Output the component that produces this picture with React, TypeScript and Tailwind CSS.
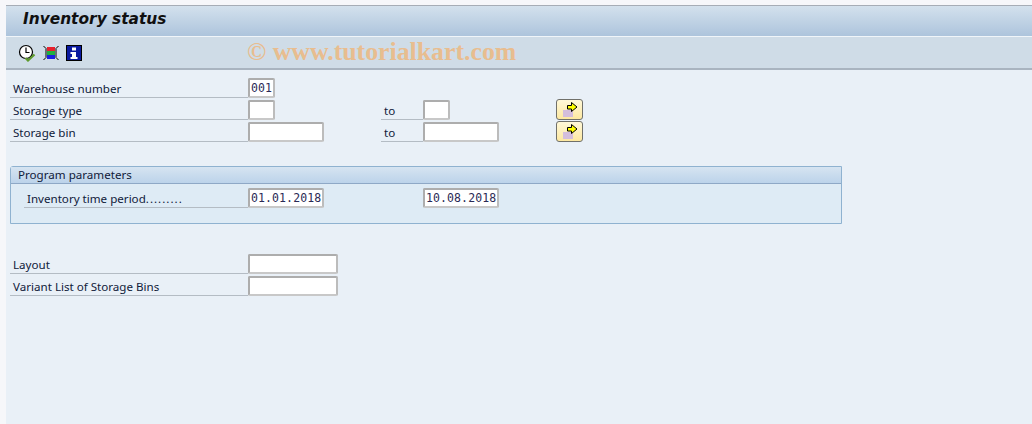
const sans = "font-['Noto_Sans','Open_Sans',sans-serif]";

function Field({ w, value, className = "" }: { w: string; value?: string; className?: string }) {
  return (
    <div
      className={`${w} h-[20px] shrink-0 bg-white border-2 border-t-[#adadad] border-l-[#adadad] border-r-[#bcbcbc] border-b-[#c8c8c8] rounded-[2px] pl-[1px] font-['DejaVu_Sans_Mono',monospace] text-[11.5px] leading-[16px] tracking-[0.1px] text-[#2a2a55] overflow-hidden ${className}`}
    >
      {value}
    </div>
  );
}

function Label({ text, dots, w, pad = "pl-[3px]" }: { text: string; dots?: string; w: string; pad?: string }) {
  return (
    <div className={`${w} ${pad} h-[20px] shrink-0 border-b border-[#b4bcc4] text-[11.6px] leading-[21px] text-[#10203a] whitespace-nowrap`}>
      {text}
      {dots && <span className="tracking-[1px]">{dots}</span>}
    </div>
  );
}

function ArrowButton() {
  return (
    <div className="w-[27px] h-[21px] shrink-0 flex items-center justify-center rounded-[3px] border border-[#70706a] bg-gradient-to-b from-[#fff8d8] to-[#fde8a0]">
      <svg width="19" height="18" viewBox="0 0 19 18">
        <rect x="3" y="9" width="10" height="7" fill="#d4bedc" />
        <path d="M7.5 4.5H11.5V1.5L17 6L11.5 10.5V8H7.5Z" fill="#ffff00" stroke="#000" strokeWidth="1" />
      </svg>
    </div>
  );
}

function Row({ children }: { children: React.ReactNode }) {
  return <div className="h-[22px] flex items-end">{children}</div>;
}

function Toolbar() {
  return (
    <div className="h-[33px] bg-[#cfdce7] border-b-2 border-[#a9b4c0] flex items-center pl-[12px] gap-[7px] relative">
      <svg width="18" height="18" viewBox="0 0 18 18">
        <circle cx="8" cy="8" r="6.5" fill="#fff" stroke="#000" strokeWidth="1.2" />
        <path d="M8 3.5V8.5H11.5" fill="none" stroke="#000" strokeWidth="1.2" />
        <path d="M7.5 14L10 16.5L16.5 10.5" fill="none" stroke="#5e9a2c" strokeWidth="2.2" />
      </svg>
      <svg width="16" height="16" viewBox="0 0 16 16">
        <rect x="4" y="2" width="8" height="4" fill="#e8202c" />
        <rect x="4" y="6" width="8" height="4" fill="#20b040" />
        <rect x="4" y="10" width="8" height="4" fill="#1a20e0" />
        <path d="M0.5 1L3 3.5V12.5L0.5 15M15.5 1L13 3.5V12.5L15.5 15" fill="none" stroke="#000" strokeWidth="1" />
      </svg>
      <svg width="16" height="16" viewBox="0 0 16 16">
        <rect x="0.5" y="0.5" width="15" height="15" fill="#0a1aa0" stroke="#000" />
        <rect x="6" y="2.5" width="4" height="3" fill="#fff" />
        <path d="M4.5 7H10V12H11.5V14H4.5V12H6V9H4.5Z" fill="#fff" />
      </svg>
      <div className="absolute left-[241px] top-[-2px] font-['Liberation_Serif',serif] font-bold text-[25.8px] leading-[33px] text-[#e8bd8f] whitespace-nowrap">
        © www.tutorialkart.com
      </div>
    </div>
  );
}

export default function App() {
  return (
    <div className={`w-[1032px] h-[424px] overflow-hidden bg-[#f6f7fa] ${sans}`}>
      <div className="h-[5px]" />
      <div className="ml-[6px] h-[419px] flex flex-col bg-[#e9f0f7]">
        <div className="h-[1px] bg-[#a6adb6]" />
        <div className="h-[30px] pl-[17px] bg-gradient-to-b from-[#d3e1ed] to-[#adc4dc] font-['DejaVu_Sans',sans-serif] font-bold italic text-[15.4px] leading-[27px] text-[#101010] whitespace-nowrap">
          Inventory status
        </div>
        <div className="h-[1px] bg-[#f0f5f9]" />
        <Toolbar />

        <div className="pl-[4px] pt-[6px] flex flex-col">
          <div className="flex flex-col">
            <Row>
              <Label text="Warehouse number" w="w-[238px]" />
              <Field w="w-[27px]" value="001" />
            </Row>
            <Row>
              <Label text="Storage type" w="w-[238px]" />
              <Field w="w-[27px]" />
              <div className="w-[106px] shrink-0" />
              <Label text="to" w="w-[42px]" />
              <Field w="w-[27px]" />
              <div className="w-[106px] shrink-0" />
              <ArrowButton />
            </Row>
            <Row>
              <Label text="Storage bin" w="w-[238px]" />
              <Field w="w-[76px]" />
              <div className="w-[57px] shrink-0" />
              <Label text="to" w="w-[42px]" />
              <Field w="w-[76px]" />
              <div className="w-[57px] shrink-0" />
              <ArrowButton />
            </Row>
          </div>

          <div className="mt-[24px] w-[832px] h-[58px] border border-[#8fb2d0] rounded-tl-[3px] bg-[#deebf5] box-border">
            <div className="h-[17px] bg-gradient-to-b from-[#d6e4f1] to-[#bcd3ea] border-b border-[#8ea8c6] pl-[7px] text-[11.6px] leading-[16px] text-[#10203a]">
              Program parameters
            </div>
            <div className="flex items-end pl-[13px] pt-[4px]">
              <Label text="Inventory time period" dots="........." w="w-[224px]" />
              <Field w="w-[76px]" value="01.01.2018" />
              <div className="w-[99px] shrink-0" />
              <Field w="w-[76px]" value="10.08.2018" />
            </div>
          </div>

          <div className="mt-[28px] flex flex-col">
            <Row>
              <Label text="Layout" w="w-[238px]" />
              <Field w="w-[90px]" />
            </Row>
            <Row>
              <Label text="Variant List of Storage Bins" w="w-[238px]" />
              <Field w="w-[90px]" />
            </Row>
          </div>
        </div>
      </div>
    </div>
  );
}
